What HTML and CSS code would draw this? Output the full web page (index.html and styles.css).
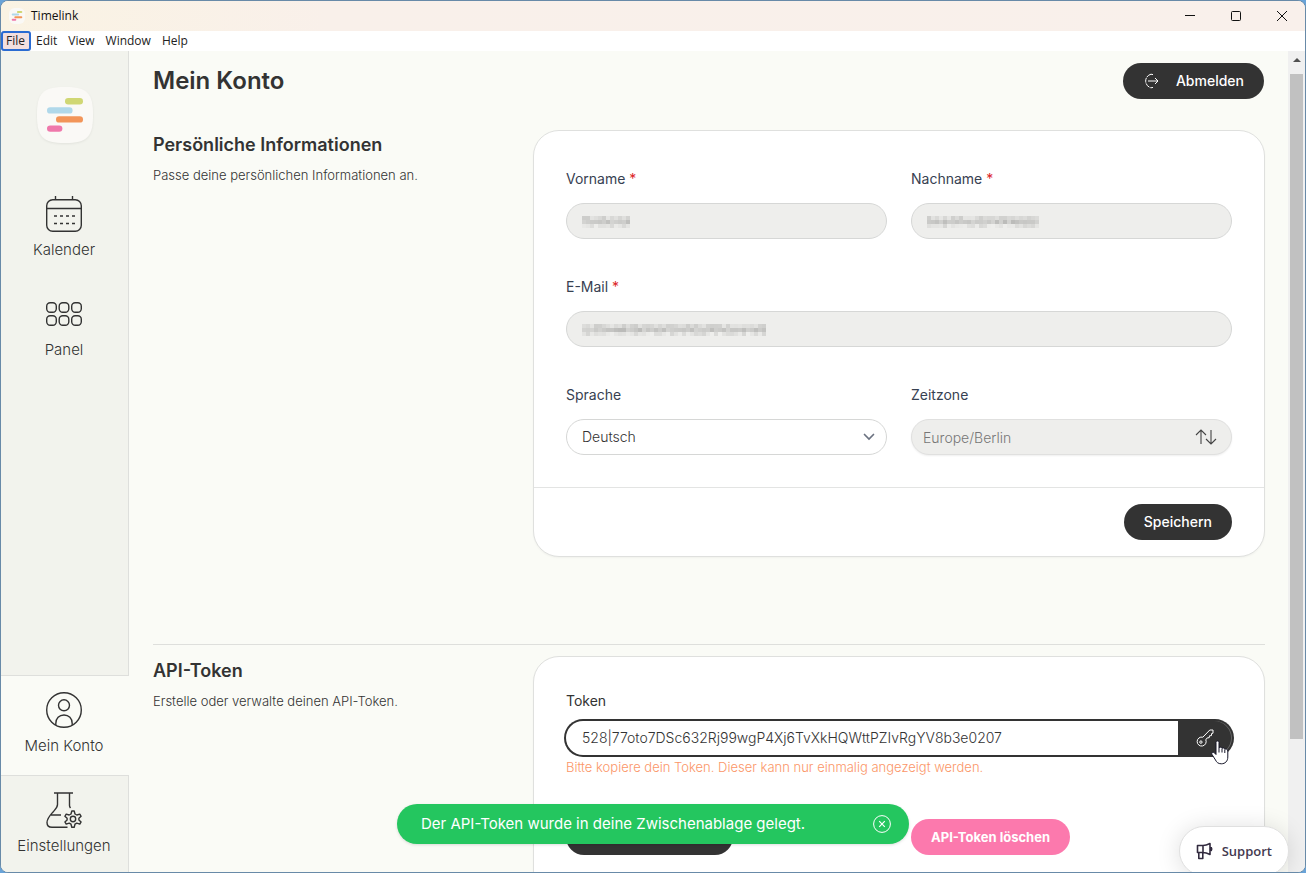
FILE: index.html
```html
<!DOCTYPE html>
<html lang="de">
<head>
<meta charset="utf-8">
<title>Timelink</title>
<link rel="stylesheet" href="styles.css">
</head>
<body>
<div class="window">
  <header class="titlebar">
    <svg class="titlebar-logo" viewBox="0 0 56 56" aria-hidden="true"><rect width="56" height="56" rx="20" fill="#faf9f6"/><g stroke-width="7" stroke-linecap="round"><path d="M31 14h12" stroke="#d0d774"/><path d="M13 23h19" stroke="#b0d8ea"/><path d="M22 32h21" stroke="#f29559"/><path d="M13 41h9" stroke="#ef78ab"/></g></svg>
    <span class="titlebar-name">Timelink</span>
    <div class="window-controls">
      <button type="button" aria-label="Minimieren"><svg width="12" height="12" viewBox="0 0 12 12"><path d="M1 5.500h10" stroke="#111"/></svg></button>
      <button type="button" aria-label="Maximieren"><svg width="12" height="12" viewBox="0 0 12 12"><rect x="1.500" y="1.500" width="9" height="9" rx="1" fill="none" stroke="#111"/></svg></button>
      <button type="button" aria-label="Schließen"><svg width="12" height="12" viewBox="0 0 12 12"><path d="M1 1l10 10M11 1L1 11" stroke="#111" fill="none"/></svg></button>
    </div>
  </header>
  <div class="menubar">
    <button type="button" class="menu-item is-active">File</button>
    <button type="button" class="menu-item">Edit</button>
    <button type="button" class="menu-item">View</button>
    <button type="button" class="menu-item">Window</button>
    <button type="button" class="menu-item">Help</button>
  </div>
  <div class="workspace">
    <nav class="sidebar">
      <svg class="logo" viewBox="0 0 56 56" aria-hidden="true"><path d="M28 0C50 0 56 6 56 28S50 56 28 56 0 50 0 28 6 0 28 0Z" fill="#faf9f6"/><g stroke-width="6.400" stroke-linecap="round"><path d="M31.200 14.200h11.600" stroke="#d0d774"/><path d="M13.200 23.400h19.200" stroke="#b0d8ea"/><path d="M22.200 32.400h20.600" stroke="#f29559"/><path d="M13.200 41.600h9" stroke="#ef78ab"/></g></svg>
      <a class="nav-item" href="#kalender">
        <svg class="nav-icon" viewBox="0 0 36 36"><rect x=".7" y="3.700" width="34.600" height="31.600" rx="6"/><path d="M1 12.500h34M9.500 0v4M26.500 0v4"/><path d="M8 20h22M8 27.500h22" stroke-dasharray="3 3"/></svg>
        <span>Kalender</span>
      </a>
      <a class="nav-item" href="#panel">
        <svg class="nav-icon" viewBox="0 0 36 36"><rect x=".7" y="6.700" width="9.600" height="9.600" rx="3.500"/><rect x="13.200" y="6.700" width="9.600" height="9.600" rx="3.500"/><rect x="25.700" y="6.700" width="9.600" height="9.600" rx="3.500"/><rect x=".7" y="19.700" width="9.600" height="9.600" rx="3.500"/><rect x="13.200" y="19.700" width="9.600" height="9.600" rx="3.500"/><rect x="25.700" y="19.700" width="9.600" height="9.600" rx="3.500"/></svg>
        <span>Panel</span>
      </a>
      <div class="nav-space"></div>
      <a class="nav-item is-current" href="#konto" aria-current="page">
        <svg class="nav-icon" viewBox="0 0 36 36"><circle cx="18" cy="18" r="17.300"/><circle cx="18" cy="13.300" r="5.500"/><path d="M9.800 33v-1.500C9.800 26.300 13.200 23 18 23s8.200 3.300 8.200 8.500V33"/></svg>
        <span>Mein Konto</span>
      </a>
      <a class="nav-item nav-item-last" href="#einstellungen">
        <svg class="nav-icon" viewBox="0 0 36 36"><path d="M8 1h19M11.500 1v11.500c0 3-2 4.500-4.500 7.500C3.500 24 1 26.500 1 30.500 1 33.800 3 35.300 6 35.300h15.500M23.500 1v12.500c0 1 .5 1.800 1 2.500M5 23h10"/><circle cx="27" cy="27" r="2.700"/><path d="M25.800 19h2.400l.8 3 1.800 1 3-.9 1.300 2.200-2.200 2v1.600l2.200 2-1.300 2.200-3-.9-1.800 1-.8 3h-2.400l-.8-3-1.800-1-3 .9-1.300-2.200 2.200-2v-1.600l-2.200-2 1.300-2.200 3 .9 1.800-1z" stroke-linejoin="round"/></svg>
        <span>Einstellungen</span>
      </a>
    </nav>
    <main class="content">
      <div class="page-head">
        <h1>Mein Konto</h1>
        <button type="button" class="btn btn-dark btn-logout">
          <svg width="16" height="16" viewBox="0 0 16 16" fill="none" stroke="#fff"><path d="M8 1.200A7 7 0 0 0 8 14.800" stroke-dasharray="5 .8"/><path d="M8 1.200l2 .4M8 14.800l2-.4M5 8h10M12 5l3 3-3 3"/></svg>
          <span>Abmelden</span>
        </button>
      </div>
      <section class="section">
        <div class="section-text">
          <h2>Persönliche Informationen</h2>
          <p>Passe deine persönlichen Informationen an.</p>
        </div>
        <form class="card">
          <div class="card-body fields">
            <div class="field">
              <label for="vorname">Vorname <span class="required">*</span></label>
              <div class="control"><input class="input is-muted" id="vorname" type="text" disabled><svg class="mosaic" data-width="48" data-seed="3" aria-hidden="true"></svg></div>
            </div>
            <div class="field">
              <label for="nachname">Nachname <span class="required">*</span></label>
              <div class="control"><input class="input is-muted" id="nachname" type="text" disabled><svg class="mosaic" data-width="112" data-seed="8" aria-hidden="true"></svg></div>
            </div>
            <div class="field field-wide">
              <label for="email">E-Mail <span class="required">*</span></label>
              <div class="control"><input class="input is-muted" id="email" type="email" disabled><svg class="mosaic" data-width="184" data-seed="5" aria-hidden="true"></svg></div>
            </div>
            <div class="field">
              <label for="sprache">Sprache</label>
              <div class="control">
                <select class="input" id="sprache"><option>Deutsch</option></select>
                <svg class="control-icon chevron" width="12" height="12" viewBox="0 0 12 12"><path d="M1.500 3.500L6 8l4.500-4.500" fill="none" stroke="#6b7280" stroke-width="1.700" stroke-linecap="round"/></svg>
              </div>
            </div>
            <div class="field">
              <label for="zeitzone">Zeitzone</label>
              <div class="control">
                <input class="input is-muted is-zone" id="zeitzone" type="text" value="Europe/Berlin" disabled>
                <svg class="control-icon" width="22" height="16" viewBox="0 0 22 16"><path d="M6 15V1.500M1 6l5-5 5 5M16 1v13.500M11 10l5 5 5-5" fill="none" stroke="#444" stroke-width="1.100"/></svg>
              </div>
            </div>
          </div>
          <div class="card-foot"><button type="button" class="btn btn-dark">Speichern</button></div>
        </form>
      </section>
      <section class="section section-next">
        <div class="section-text">
          <h2>API-Token</h2>
          <p>Erstelle oder verwalte deinen API-Token.</p>
        </div>
        <form class="card">
          <div class="card-body token-body">
            <label class="token-label" for="token">Token</label>
            <div class="token-field">
              <input class="token-input" id="token" type="text" value="528|77oto7DSc632Rj99wgP4Xj6TvXkHQWttPZIvRgYV8b3e0207" readonly>
              <button type="button" class="token-copy" aria-label="Token">
                <svg width="18" height="18" viewBox="0 0 18 18" fill="none" stroke="#fff" stroke-linejoin="round"><path d="M6.800 8.200L13.800 1h3.200v3.200l-1.500.4v2l-2 .2-.3 1.900-2 .2-1.400 1.900A4.500 4.500 0 1 1 6.800 8.200z"/><circle cx="4.900" cy="13.100" r="1.200"/></svg>
              </button>
              <svg class="cursor" width="18" height="25" viewBox="0 0 18 25" aria-hidden="true"><path d="M5 2.500C5 .5 8 .5 8 2.500V8c.5-1.300 3-1 3 .5.700-1 2.800-.6 2.800 1 .8-.8 3-.4 3 1.500V17c0 4-2.500 6.800-6.500 6.800-3 0-4.800-1.500-5.800-3.800L1 14.500c-1-2 1.500-3 2.500-1.500L5 14.500z" fill="#fff" stroke="#161629"/><path d="M8 8v4.500M11 9v3.500M13.800 10v3" stroke="#161629"/></svg>
            </div>
            <p class="token-hint">Bitte kopiere dein Token. Dieser kann nur einmalig angezeigt werden.</p>
            <div class="token-actions">
              <div><button type="button" class="btn btn-dark btn-blank"></button></div>
              <div><button type="button" class="btn btn-pink">API-Token löschen</button></div>
            </div>
          </div>
        </form>
      </section>
    </main>
    <div class="scrollbar" aria-hidden="true"><i class="scroll-arrow"></i><i class="scroll-thumb"></i></div>
  </div>
  <div class="toast" role="status">
    <span>Der API-Token wurde in deine Zwischenablage gelegt.</span>
    <button type="button" aria-label="Schließen"><svg width="18" height="18" viewBox="0 0 18 18" fill="none" stroke="#fff"><circle cx="9" cy="9" r="8.400"/><path d="M6.200 6.200l5.600 5.600M11.800 6.200l-5.600 5.600" stroke-width="1.200"/></svg></button>
  </div>
  <button type="button" class="support">
    <svg width="18" height="18" viewBox="0 0 18 18" fill="none" stroke="#322b3f" stroke-width="1.600" stroke-linejoin="round"><path d="M1.500 3.500H7c3 0 5-1 7-2v11c-2-1-4-2-7-2H1.500zM2.800 10.500v6h4v-6M7 3.500v7M14 5c2.300.3 2.300 3.700 0 4"/></svg>
    <span>Support</span>
  </button>
</div>
<script src="mosaic.js"></script>
</body>
</html>
```
FILE: styles.css
```css
* { box-sizing: border-box; }
html, body { height: 100%; margin: 0; }
body { background: #69a3d8; color: #333; font: 300 14px/20px Inter, "Liberation Sans", sans-serif; }
button, input, select { font: inherit; color: inherit; margin: 0; }
button { border: 0; padding: 0; background: none; }
h1, h2, p { margin: 0; }

.window { position: relative; display: flex; flex-direction: column; height: 100vh; overflow: hidden; border: 1px solid #688aa8; border-radius: 8px; background: #fafbf6; }

.titlebar { display: flex; align-items: center; gap: 6px; height: 30px; flex: none; padding-left: 8px; background: linear-gradient(90deg, #faf3e3, #f9f0ea 25%, #f9f0eb); color: #111; font: 400 12px/16px "Open Sans", "Noto Sans", sans-serif; }
.titlebar-logo { width: 16px; height: 16px; }
.titlebar-name { flex: 1; }
.window-controls { display: flex; }
.window-controls button { display: grid; place-items: center; width: 46px; height: 30px; }

.menubar { display: flex; height: 20px; flex: none; background: #fff; color: #222; font: 400 12px/16px "Open Sans", "Noto Sans", sans-serif; }
.menu-item { padding: 0 6px 0 5px; }
.menu-item.is-active { background: #f2dfdf; box-shadow: inset 0 0 0 2px #2a6bd2; border-radius: 3px; }

.workspace { display: flex; flex: 1; min-height: 0; }
.sidebar { display: flex; flex-direction: column; width: 128px; flex: none; padding-top: 36px; background: #f2f3ed; box-shadow: inset -1px 0 #dedfdc; }
.logo { align-self: center; width: 56px; height: 56px; margin-bottom: 36px; filter: drop-shadow(0 1px 1px #0001); }
.nav-item { display: flex; flex-direction: column; align-items: center; gap: 6px; padding: 16px 2px 17px 0; border-top: 1px solid transparent; color: #333; font-size: 15px; line-height: 24px; text-decoration: none; }
.nav-icon { width: 36px; height: 36px; fill: none; stroke: #333; stroke-width: 1.400; }
.nav-space { flex: 1; }
.nav-item.is-current { background: #fafbf6; border-color: #dedfdc; }
.nav-item-last { border-color: #dedfdc; padding-bottom: 14px; }

.content { flex: 1; min-width: 0; overflow: hidden; padding: 12px 23px 0 24px; }
.page-head { display: flex; align-items: center; justify-content: space-between; padding-right: 1px; }
h1 { font-size: 24px; line-height: 36px; font-weight: 600; }
h2 { font-size: 18px; line-height: 28px; font-weight: 600; margin-bottom: 6px; }
.section { display: grid; grid-template-columns: 1fr 2fr; gap: 14px; margin-top: 31px; }
.section-next { margin-top: 87px; padding-top: 11px; border-top: 1px solid #dedfdc; }
.section-text { padding-top: 1px; font-size: 13px; }

.btn { height: 36px; padding: 0 20px; border-radius: 18px; color: #fff; font-weight: 500; }
.btn-dark { background: #333; }
.btn-pink { background: #fc79ad; font-size: 13px; font-weight: 700; }
.btn-logout { display: flex; align-items: center; gap: 17px; }
.btn-blank { width: 52%; }

.card { background: #fff; border: 1px solid #dfe0de; border-radius: 26px; overflow: hidden; box-shadow: 0 1px 2px #0000000a; }
.card-body { padding: 38px 32px 32px; }
.fields { display: grid; grid-template-columns: 1fr 1fr; gap: 38px 24px; }
.field { display: flex; flex-direction: column; gap: 14px; color: #374151; font-weight: 400; }
.field-wide { grid-column: 1 / -1; }
.required { color: #dc2626; }
.control { position: relative; }
.input { display: block; width: 100%; height: 36px; padding: 0 15px; border: 1px solid #d6d7d6; border-radius: 18px; background: #fff; appearance: none; color: #333; font-weight: 300; opacity: 1; }
.input.is-muted { background: #eeeeec; }
.input.is-zone { padding: 0 11px; border-color: #e0e0df; box-shadow: 0 1px 2px #0001; color: #777; }
.mosaic { position: absolute; left: 16px; top: 13px; height: 12px; }
.control-icon { position: absolute; right: 15px; top: 10px; pointer-events: none; }
.control-icon.chevron { right: 12px; top: 12px; }
.card-foot { display: flex; justify-content: flex-end; padding: 16px 32px; border-top: 1px solid #e3e4e3; }

.token-body { padding-top: 34px; padding-bottom: 64px; }
.token-label { display: block; margin-bottom: 10px; font-weight: 400; }
.token-field { position: relative; display: flex; height: 34px; border-radius: 17px; box-shadow: 0 0 0 2px #333; background: #333; }
.token-input { flex: 1; min-width: 0; padding: 0 16px; border: 0; outline: 0; border-radius: 17px 0 0 17px; background: #fff; font-weight: 300; }
.token-copy { display: grid; place-items: center; width: 54px; border-radius: 0 17px 17px 0; box-shadow: inset -1px 0 #666; }
.cursor { position: absolute; right: 3px; top: 19px; }
.token-hint { margin: 2px 0 42px; color: #fb9668; font-size: 13px; }
.token-actions { display: grid; grid-template-columns: 1fr 1fr; gap: 24px; }

.scrollbar { display: flex; flex-direction: column; align-items: center; width: 17px; flex: none; padding-bottom: 133px; background: #f0f0f0; }
.scroll-arrow { margin: 7px 0 12px; border: 4px solid transparent; border-top: 0; border-bottom-color: #505050; }
.scroll-thumb { width: 13px; flex: 1; background: #c1c1c1; }

.toast { position: absolute; left: 50%; bottom: 28px; width: 512px; margin-left: -256px; display: flex; align-items: center; justify-content: space-between; height: 40px; padding: 0 18px 0 24px; border-radius: 20px; background: #24c65f; box-shadow: 0 1px 3px #0002; color: #fff; font-size: 15px; font-weight: 400; }
.toast button { display: flex; }
.support { position: absolute; right: 16px; bottom: -4px; display: flex; align-items: center; gap: 8px; height: 50px; padding: 0 16px; border: 1px solid #e0e0e0; border-radius: 25px; background: #fff; box-shadow: 0 2px 24px #0002; color: #43394f; font: 600 13px/20px "Open Sans", "Noto Sans", sans-serif; }
```
FILE: mosaic.js
```js
// Fills the masked name and mail fields with a block pattern.
const SIZE = 4;
const BASE = [218, 200, 226];
document.querySelectorAll('.mosaic').forEach((svg) => {
  const width = Number(svg.dataset.width);
  let state = Number(svg.dataset.seed);
  svg.setAttribute('width', width);
  for (let row = 0; row < 3; row += 1) {
    for (let x = 0; x < width; x += SIZE) {
      state = (state * 73 + 41) % 997;
      const shade = BASE[row] + (state % 26) - 13;
      const cell = document.createElementNS('http://www.w3.org/2000/svg', 'rect');
      cell.setAttribute('x', x);
      cell.setAttribute('y', row * SIZE);
      cell.setAttribute('width', SIZE);
      cell.setAttribute('height', SIZE);
      cell.setAttribute('fill', `rgb(${shade},${shade},${shade - 2})`);
      svg.append(cell);
    }
  }
});
```
